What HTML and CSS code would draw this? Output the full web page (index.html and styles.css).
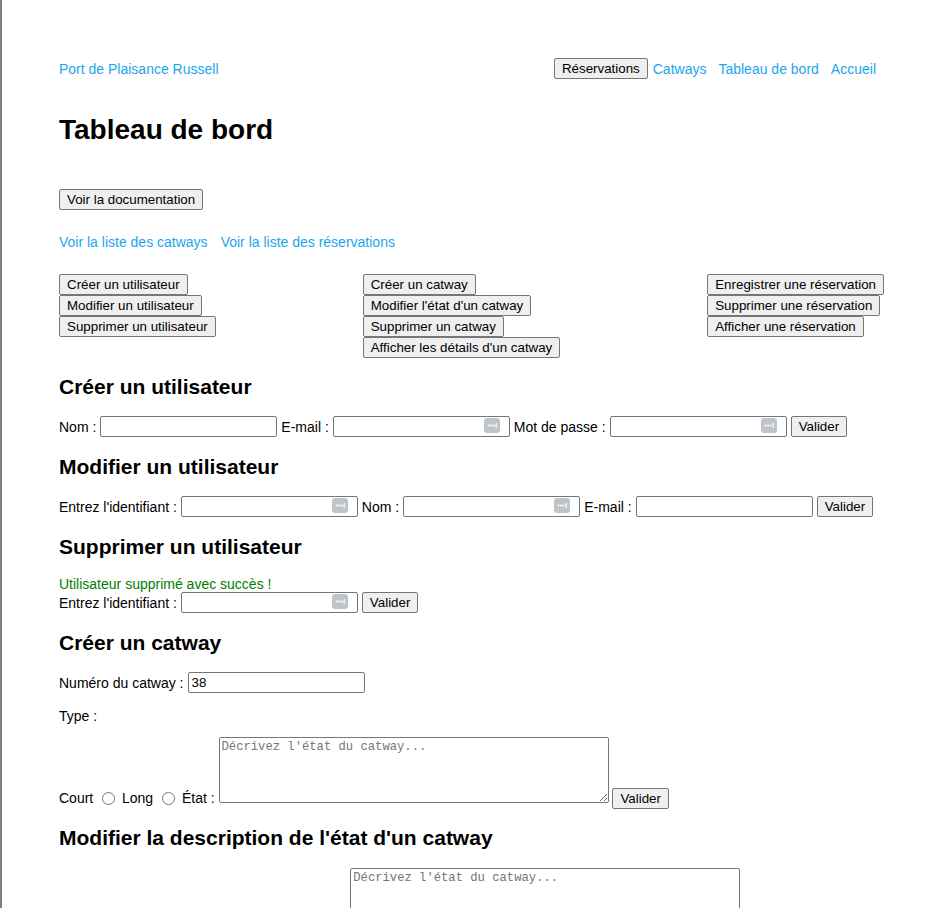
FILE: index.html
```html
<!DOCTYPE html>
<html lang="fr">
<head>
<meta charset="utf-8">
<title>Tableau de bord - Port de Plaisance Russell</title>
<link rel="stylesheet" href="styles.css">
</head>
<body>
<div class="page">
  <header class="topbar">
    <a class="brand" href="#">Port de Plaisance Russell</a>
    <nav class="nav">
      <button class="btn nav-btn" type="button">Réservations</button>
      <a href="#">Catways</a>
      <a href="#">Tableau de bord</a>
      <a href="#">Accueil</a>
    </nav>
  </header>

  <h1 class="title">Tableau de bord</h1>

  <div class="doc"><button class="btn" type="button">Voir la documentation</button></div>

  <div class="links">
    <a href="#">Voir la liste des catways</a>
    <a href="#">Voir la liste des réservations</a>
  </div>

  <div class="actions">
    <div class="col">
      <button class="btn" type="button">Créer un utilisateur</button>
      <button class="btn" type="button">Modifier un utilisateur</button>
      <button class="btn" type="button">Supprimer un utilisateur</button>
    </div>
    <div class="col">
      <button class="btn" type="button">Créer un catway</button>
      <button class="btn" type="button">Modifier l'état d'un catway</button>
      <button class="btn" type="button">Supprimer un catway</button>
      <button class="btn" type="button">Afficher les détails d'un catway</button>
    </div>
    <div class="col">
      <button class="btn" type="button">Enregistrer une réservation</button>
      <button class="btn" type="button">Supprimer une réservation</button>
      <button class="btn" type="button">Afficher une réservation</button>
    </div>
  </div>

  <section class="block">
    <h2 class="heading">Créer un utilisateur</h2>
    <form class="row">
      <label>Nom :</label>
      <span class="field"><input class="text" type="text"></span>
      <label>E-mail :</label>
      <span class="field"><input class="text" type="email"><svg class="pm" viewBox="0 0 16 15" width="16" height="15"><rect x="0" y="0" width="16" height="15" rx="3" fill="#bfc3ca"/><circle cx="4.5" cy="7.5" r="1" fill="#fff"/><circle cx="7" cy="7.5" r="1" fill="#fff"/><circle cx="9.5" cy="7.5" r="1" fill="#fff"/><rect x="11.5" y="5" width="1.2" height="5" fill="#fff"/></svg></span>
      <label>Mot de passe :</label>
      <span class="field"><input class="text" type="password"><svg class="pm" viewBox="0 0 16 15" width="16" height="15"><rect x="0" y="0" width="16" height="15" rx="3" fill="#bfc3ca"/><circle cx="4.5" cy="7.5" r="1" fill="#fff"/><circle cx="7" cy="7.5" r="1" fill="#fff"/><circle cx="9.5" cy="7.5" r="1" fill="#fff"/><rect x="11.5" y="5" width="1.2" height="5" fill="#fff"/></svg></span>
      <button class="btn" type="button">Valider</button>
    </form>
  </section>

  <section class="block">
    <h2 class="heading">Modifier un utilisateur</h2>
    <form class="row">
      <label>Entrez l'identifiant :</label>
      <span class="field"><input class="text" type="text"><svg class="pm" viewBox="0 0 16 15" width="16" height="15"><rect x="0" y="0" width="16" height="15" rx="3" fill="#bfc3ca"/><circle cx="4.5" cy="7.5" r="1" fill="#fff"/><circle cx="7" cy="7.5" r="1" fill="#fff"/><circle cx="9.5" cy="7.5" r="1" fill="#fff"/><rect x="11.5" y="5" width="1.2" height="5" fill="#fff"/></svg></span>
      <label>Nom :</label>
      <span class="field"><input class="text" type="text"><svg class="pm" viewBox="0 0 16 15" width="16" height="15"><rect x="0" y="0" width="16" height="15" rx="3" fill="#bfc3ca"/><circle cx="4.5" cy="7.5" r="1" fill="#fff"/><circle cx="7" cy="7.5" r="1" fill="#fff"/><circle cx="9.5" cy="7.5" r="1" fill="#fff"/><rect x="11.5" y="5" width="1.2" height="5" fill="#fff"/></svg></span>
      <label>E-mail :</label>
      <span class="field"><input class="text" type="email"></span>
      <button class="btn" type="button">Valider</button>
    </form>
  </section>

  <section class="block">
    <h2 class="heading">Supprimer un utilisateur</h2>
    <p class="success">Utilisateur supprimé avec succès !</p>
    <form class="row tight">
      <label>Entrez l'identifiant :</label>
      <span class="field"><input class="text" type="text"><svg class="pm" viewBox="0 0 16 15" width="16" height="15"><rect x="0" y="0" width="16" height="15" rx="3" fill="#bfc3ca"/><circle cx="4.5" cy="7.5" r="1" fill="#fff"/><circle cx="7" cy="7.5" r="1" fill="#fff"/><circle cx="9.5" cy="7.5" r="1" fill="#fff"/><rect x="11.5" y="5" width="1.2" height="5" fill="#fff"/></svg></span>
      <button class="btn" type="button">Valider</button>
    </form>
  </section>

  <section class="block">
    <h2 class="heading">Créer un catway</h2>
    <form class="catway-form">
      <div class="row">
        <label>Numéro du catway :</label>
        <span class="field"><input class="text" type="text" value="38"></span>
      </div>
      <p class="type-label">Type :</p>
      <div class="flow">
        <label>Court</label> <input class="radio" type="radio" name="type"> <label>Long</label> <input class="radio" type="radio" name="type"> <label>État :</label> <textarea class="area" placeholder="Décrivez l'état du catway..."></textarea> <button class="btn" type="button">Valider</button>
      </div>
    </form>
  </section>

  <section class="block last">
    <h2 class="heading">Modifier la description de l'état d'un catway</h2>
    <form class="flow second">
      <label>Numéro du catway :</label> <input class="text short" type="text"> <textarea class="area" placeholder="Décrivez l'état du catway..."></textarea> <button class="btn" type="button">Valider</button>
    </form>
  </section>
</div>
</body>
</html>
```

FILE: styles.css
```css
html {
  border-left: 2px solid #808080;
  scrollbar-width: none;
  min-height: 100%;
}
html::-webkit-scrollbar { display: none; }

body {
  margin: 0;
  font-family: "Liberation Sans", Arial, sans-serif;
  font-size: 14px;
  color: #000;
  background: #fff;
}

a {
  color: #1aa6ee;
  text-decoration: none;
}

.page {
  padding: 58px 57px 40px 57px;
}

.topbar {
  display: flex;
  justify-content: space-between;
  align-items: center;
  height: 21px;
}

.brand {
  line-height: 16px;
}

.nav {
  display: flex;
  align-items: center;
  gap: 4px;
  padding-right: 4px;
}

.nav a {
  padding: 0 4px;
  line-height: 16px;
}

.btn {
  font-family: "Liberation Sans", Arial, sans-serif;
  font-size: 13.33px;
  height: 21px;
  padding: 0 7px;
  margin: 0;
  border: 1px solid #767676;
  border-radius: 2px;
  background: #efefef;
  color: #000;
  box-sizing: border-box;
  line-height: 19px;
  white-space: nowrap;
}

.nav .nav-btn {
  margin-right: -3px;
}

.title {
  font-size: 28px;
  line-height: 32px;
  font-weight: bold;
  margin: 35px 0 43px;
}

.doc {
  display: flex;
}

.links {
  display: flex;
  gap: 13px;
  margin-top: 24px;
  line-height: 16px;
}

.actions {
  display: flex;
  justify-content: space-between;
  margin-top: 24px;
}

.col {
  display: flex;
  flex-direction: column;
  align-items: flex-start;
}

.heading {
  font-size: 21px;
  line-height: 24px;
  font-weight: bold;
  margin: 17px 0 0;
}

.block + .block .heading {
  margin-top: 18px;
}

.block.last .heading {
  margin-top: 17px;
}

.row {
  display: flex;
  align-items: center;
  gap: 4px;
  margin-top: 17px;
  height: 21px;
}

.row.tight {
  margin-top: 0;
}

.field {
  position: relative;
  display: inline-flex;
}

.text {
  width: 177px;
  height: 21px;
  box-sizing: border-box;
  margin: 0;
  padding: 1px 3px;
  border: 1px solid #767676;
  border-radius: 2px;
  font-family: "Liberation Sans", Arial, sans-serif;
  font-size: 13.33px;
  color: #000;
  background: #fff;
}

.text.short {
  width: 159px;
}

.pm {
  position: absolute;
  right: 10px;
  top: 2px;
}

.success {
  color: #008000;
  margin: 17px 0 0;
  line-height: 16px;
}

.catway-form .row {
  margin-top: 17px;
}

.type-label {
  margin: 15px 0 0;
  line-height: 16px;
}

.flow {
  margin-top: 13px;
  line-height: 16px;
}

.flow.second {
  margin-top: 18px;
}

.radio {
  width: 13px;
  height: 13px;
  margin: 3px 3px 0 5px;
  vertical-align: -2px;
}

.area {
  width: 390px;
  height: 66px;
  box-sizing: border-box;
  margin: 0;
  padding: 2px;
  border: 1px solid #767676;
  border-radius: 2px;
  font-family: "Liberation Mono", "DejaVu Sans Mono", monospace;
  font-size: 12.2px;
  vertical-align: baseline;
  resize: both;
}

.area::placeholder {
  color: #757575;
}
```
